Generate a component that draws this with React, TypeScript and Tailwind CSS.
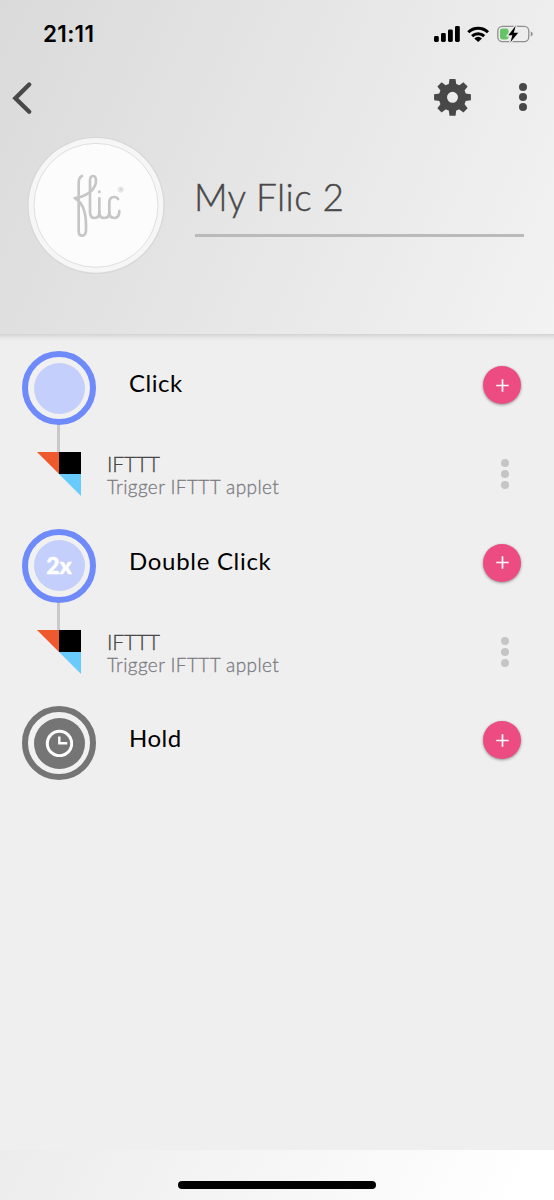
import { clsx } from 'clsx'

type Variant = 'active' | 'idle'

interface Trigger {
  title: string
  titleClass: string
  variant: Variant
  badge?: 'double' | 'hold'
  action?: { name: string; description: string }
}

const IFTTT_ACTION = { name: 'IFTTT', description: 'Trigger IFTTT applet' }

const TRIGGERS: Trigger[] = [
  { title: 'Click', titleClass: 'tracking-[0.5px]', variant: 'active', action: IFTTT_ACTION },
  { title: 'Double Click', titleClass: 'tracking-[0.7px]', variant: 'active', badge: 'double', action: IFTTT_ACTION },
  { title: 'Hold', titleClass: 'tracking-[0.5px]', variant: 'idle', badge: 'hold' },
]

function StatusBar() {
  return (
    <div className="flex h-[68px] items-center justify-between pl-[43px] pr-[21px]">
      <span className="font-['Inter'] text-[22.5px] font-semibold leading-none tracking-[0.3px] text-black">21:11</span>
      <svg width="100" height="20" viewBox="433 24 100 20">
        {/* Signal */}
        <rect x="434" y="36" width="4.8" height="6" rx="1.4" />
        <rect x="441" y="33" width="4.8" height="9" rx="1.4" />
        <rect x="448" y="29.5" width="4.8" height="12.5" rx="1.4" />
        <rect x="455" y="26" width="4.8" height="16" rx="1.4" />
        {/* Wifi */}
        <g fill="none" stroke="black" strokeWidth="3">
          <path d="M468.3 32.2 A14 14 0 0 1 488 32.2" />
          <path d="M472.1 36.1 A8.7 8.7 0 0 1 484.2 36.1" />
        </g>
        <path d="M474.3 38.4 A5.6 5.6 0 0 1 482 38.4 L478.2 42 Z" />
        {/* Battery */}
        <rect x="497.8" y="26.4" width="31" height="15.2" rx="4.6" fill="none" stroke="#8f8f8f" strokeWidth="1.3" />
        <path d="M530.8 31.5 Q532.8 32.4 532.8 34 Q532.8 35.6 530.8 36.5 Z" fill="#8f8f8f" />
        <rect x="500" y="28.6" width="8.6" height="10.8" rx="2.4" fill="#65c466" />
        <path d="M515.7 25.7 L508.3 35.3 H512.4 L510.4 42.3 L518.2 32.7 H513.8 Z" fill="black" stroke="#e9e9e9" strokeWidth="2.6" paintOrder="stroke" />
      </svg>
    </div>
  )
}

const GEAR_TEETH = [0, 45, 90, 135, 180, 225, 270, 315]

function GearIcon() {
  return (
    <svg width="38" height="38" viewBox="-19.5 -18.3 38 38" className="text-[#484848]">
      {GEAR_TEETH.map((angle) => (
        <path key={angle} d="M-4 -11 L-3 -18.4 H3 L4 -11 Z" fill="currentColor" transform={`rotate(${angle})`} />
      ))}
      <circle r="9.6" fill="none" stroke="currentColor" strokeWidth="8.2" />
    </svg>
  )
}

function Dots({ className, gap }: { className: string; gap: string }) {
  return (
    <div className={clsx('flex flex-col', gap)}>
      <span className={clsx('rounded-full', className)} />
      <span className={clsx('rounded-full', className)} />
      <span className={clsx('rounded-full', className)} />
    </div>
  )
}

function FlicLogo() {
  return (
    <svg width="140" height="140" viewBox="48 30 420 420">
      <circle cx="258" cy="241" r="206" fill="#d8d8d8" />
      <circle cx="258" cy="241" r="202" fill="#f6f6f6" />
      <circle cx="258" cy="241" r="186" fill="#fcfcfc" stroke="#d8d8d8" strokeWidth="2.5" />
      <g fill="none" stroke="#c6c6c6" strokeWidth="8" strokeLinecap="round" strokeLinejoin="round">
        <path d="M216 153 C208 157 206 164 206 174 V318 C206 328 209 332 216 332 C224 332 228 327 228 316 C229 278 226 236 194 219 C228 217 258 193 258 167 C258 158 255 153 249 153 C243 153 240 159 240 168 V260 C240 273 245 279 254 279 C263 279 268 273 268 262 V220" />
        <path d="M268 260 C268 273 274 279 283 279 C293 279 298 273 298 262 V233 C298 221 304 216 312 216 C318 216 322 218 324 222" />
        <path d="M298 262 C298 273 304 279 313 279 C323 279 328 272 328 258" />
      </g>
      <circle cx="268" cy="200" r="4.5" fill="#c6c6c6" />
      <circle cx="332" cy="194" r="8" fill="#ececec" stroke="#dcdcdc" strokeWidth="2" />
      <text x="332" y="198.5" textAnchor="middle" fontFamily="Lato, sans-serif" fontSize="12" fontWeight="700" fill="#cfcfcf">R</text>
    </svg>
  )
}

function Header() {
  return (
    <header className="h-[334px]">
      <StatusBar />
      <div className="flex h-[59px] items-center pl-[11px] pr-[27px]">
        <svg width="22" height="34" viewBox="0 0 22 34">
          <path d="M18.2 3.5 L4.4 17.2 L18.2 30.7" fill="none" stroke="#484848" strokeWidth="4.4" strokeLinecap="round" />
        </svg>
        <div className="ml-auto mr-12">
          <GearIcon />
        </div>
        <Dots className="size-2 bg-[#484848]" gap="gap-[2px] pb-px" />
      </div>
      <div className="flex pl-[26px] pr-[30px] pt-2">
        <FlicLogo />
        <div className="ml-[29px] mt-5 h-[82px] flex-1 border-b-[3px] border-[#bababa] pt-5">
          <h1 className="-ml-px whitespace-nowrap text-[37px] font-light leading-[44px] tracking-[0.4px] text-[#484848] [-webkit-text-stroke:0.4px_#484848]">
            My Flic 2
          </h1>
        </div>
      </div>
    </header>
  )
}

function TriggerBadge({ variant, badge }: Pick<Trigger, 'variant' | 'badge'>) {
  return (
    <div
      className={clsx(
        'flex size-[74px] shrink-0 items-center justify-center rounded-full border-[6px] bg-[#f1f1f1]',
        variant === 'active' ? 'border-[#6f8afa]' : 'border-[#757575]'
      )}
    >
      <div
        className={clsx(
          'flex size-[51px] items-center justify-center rounded-full',
          variant === 'active' ? 'bg-[#c5cffc]' : 'bg-[#757575]'
        )}
      >
        {badge === 'double' && (
          <span className="text-[23px] font-black leading-none text-white [-webkit-text-stroke:0.5px_white]">2x</span>
        )}
        {badge === 'hold' && (
          <svg width="28" height="28" viewBox="0 0 28 28" fill="none" stroke="white">
            <circle cx="14.5" cy="14.5" r="12.2" strokeWidth="3" />
            <path d="M14.3 7.5 V14.3 H22.3" strokeWidth="2.4" />
          </svg>
        )}
      </div>
    </div>
  )
}

function AddButton() {
  return (
    <button className="mt-[15px] flex size-[38px] items-center justify-center rounded-full bg-[#ec4c82] shadow-[0_1px_3px_rgba(0,0,0,0.4)]">
      <svg width="13" height="13" viewBox="0 0 13 13">
        <path d="M6.5 0.3 V12.7 M0.3 6.5 H12.7" stroke="white" strokeWidth="1.7" />
      </svg>
    </button>
  )
}

function IftttIcon() {
  return (
    <svg width="44" height="44" viewBox="0 0 44 44">
      <path d="M0 0 H22 V22 Z" fill="#ee5a2d" />
      <rect x="22" width="22" height="22" fill="#000" />
      <path d="M22 22 H44 V44 Z" fill="#68cbfb" />
    </svg>
  )
}

function TriggerRow({ title, titleClass, variant, badge, action }: Trigger) {
  return (
    <section className="h-[177.5px]">
      <div className="flex items-start pl-[22px] pr-[33px]">
        <TriggerBadge variant={variant} badge={badge} />
        <h2 className={clsx('ml-[33px] mt-[17px] flex-1 text-2xl leading-[30px] text-black', titleClass)}>{title}</h2>
        <AddButton />
      </div>
      {action && (
        <>
          <div className="ml-[57px] h-[27px] w-[3px] bg-[#c9c9c9]" />
          <div className="flex items-start pl-[37px] pr-[45px]">
            <IftttIcon />
            <div className="ml-[26px] flex-1">
              <p className="text-[21px] font-light leading-[24px] tracking-[-0.2px] text-[#484848] [-webkit-text-stroke:0.3px_#484848]">
                {action.name}
              </p>
              <p className="text-[19px] font-light leading-[21px] tracking-[0.4px] text-[#7b7b82] [-webkit-text-stroke:0.3px_#7b7b82]">
                {action.description}
              </p>
            </div>
            <div className="mt-[7px]">
              <Dots className="size-2 bg-[#c5c5c5]" gap="gap-[3px]" />
            </div>
          </div>
        </>
      )}
    </section>
  )
}

export default function App() {
  return (
    <div className="flex h-[1200px] w-[554px] flex-col overflow-hidden bg-[linear-gradient(114deg,#dadada_0%,#ffffff_97%)] font-['Lato',sans-serif]">
      <Header />
      <main className="h-[816px] bg-[#efefef]">
        <div className="h-[17px] bg-[linear-gradient(to_bottom,#d2d2d2_0px,#e4e4e4_3px,#efefef_7px)]" />
        {TRIGGERS.map((trigger) => (
          <TriggerRow key={trigger.title} {...trigger} />
        ))}
      </main>
      {/* Home indicator */}
      <div className="flex flex-1 justify-center pt-[30.5px]">
        <div className="h-2 w-[198px] rounded-full bg-black" />
      </div>
    </div>
  )
}
